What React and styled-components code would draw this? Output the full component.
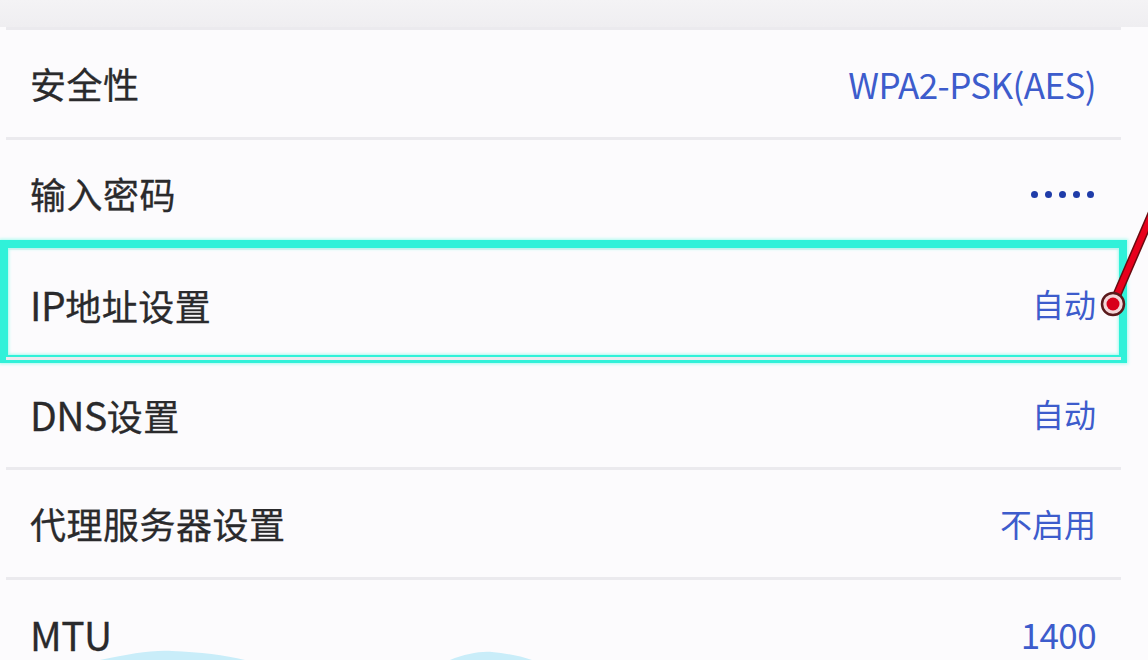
import React from 'react';
import styled, { createGlobalStyle } from 'styled-components';

const GlobalStyle = createGlobalStyle`
  html, body {
    margin: 0;
    padding: 0;
    background: #fcfbfd;
  }
  #root {
    width: 1148px;
    height: 660px;
    overflow: hidden;
  }
`;

const StyledPage = styled.div`
  position: relative;
  width: 1148px;
  height: 660px;
  overflow: hidden;
  background: #fcfbfd;
  font-family: 'Noto Sans CJK SC', 'Noto Sans', sans-serif;
`;

const StyledTopBand = styled.div`
  height: 27px;
  background: linear-gradient(to bottom, #f4f3f5, #efeef1);
`;

const StyledList = styled.div`
  margin-left: 6px;
  width: 1115px;
`;

const StyledRow = styled.div`
  position: relative;
  box-sizing: border-box;
  height: 110px;
  padding-top: 1px;
  border-top: 3px solid #ebeaee;
  display: flex;
  align-items: center;
  justify-content: space-between;
  padding-left: 24px;
  padding-right: 25px;
  line-height: 1.1;
`;

const StyledLabel = styled.span`
  font-size: 36px;
  color: #2a2a2c;
  letter-spacing: 0.5px;
  -webkit-text-stroke: 0.3px #2a2a2c;
`;

const StyledLatin = styled.span`
  font-size: 39px;
  letter-spacing: -0.5px;
`;

const StyledValue = styled.span`
  font-size: ${({ latin }) => (latin ? '35px' : '32px')};
  color: #3d5ccc;
  letter-spacing: ${({ latin }) => (latin ? '-0.6px' : '0')};
`;

const StyledDots = styled.span`
  display: flex;
  gap: 7px;
  margin-right: 2px;
`;

const StyledDot = styled.i`
  width: 7px;
  height: 7px;
  border-radius: 50%;
  background: #1f3ca9;
`;

const StyledHighlight = styled.div`
  position: absolute;
  left: -6px;
  right: -6px;
  top: -10px;
  bottom: -6px;
  border: 8px solid #30f1d9;
  box-shadow: 0 0 3px 1px #a8fbef, inset 0 0 3px 1px #a8fbef;
  pointer-events: none;
`;

const StyledPointer = styled.svg`
  position: absolute;
  left: 1088px;
  top: 205px;
  width: 60px;
  height: 120px;
`;

const StyledClouds = styled.svg`
  position: absolute;
  left: 0;
  bottom: 0;
  width: 1148px;
  height: 14px;
`;

const rows = [
  { label: ['安全性'], value: 'WPA2-PSK(AES)', latin: true },
  { label: ['输入密码'], dots: 5 },
  { label: ['IP', '地址设置'], value: '自动', highlight: true },
  { label: ['DNS', '设置'], value: '自动' },
  { label: ['代理服务器设置'], value: '不启用' },
  { label: ['MTU'], latinLabel: true, value: '1400', latin: true },
];

const renderLabel = (row) => {
  if (row.latinLabel) return <StyledLatin>{row.label[0]}</StyledLatin>;
  if (row.label.length === 2) {
    return (
      <>
        <StyledLatin>{row.label[0]}</StyledLatin>
        {row.label[1]}
      </>
    );
  }
  return row.label[0];
};

const App = () => (
  <>
    <GlobalStyle />
    <StyledPage>
      <StyledTopBand />
      <StyledList>
        {rows.map((row) => (
          <StyledRow key={row.label.join('')}>
            <StyledLabel>{renderLabel(row)}</StyledLabel>
            {row.dots ? (
              <StyledDots>
                {Array.from({ length: row.dots }).map((_, i) => (
                  <StyledDot key={i} />
                ))}
              </StyledDots>
            ) : (
              <StyledValue latin={row.latin}>{row.value}</StyledValue>
            )}
            {row.highlight && <StyledHighlight />}
          </StyledRow>
        ))}
      </StyledList>

      <StyledPointer viewBox="0 0 60 120">
        <line x1="66" y1="4" x2="25" y2="99" stroke="#6b0a10" strokeWidth="9" strokeLinecap="round" />
        <line x1="66" y1="4" x2="25" y2="99" stroke="#e8001c" strokeWidth="6" strokeLinecap="round" />
        <circle cx="25" cy="99" r="11" fill="#f3d6d8" stroke="#5a1a1c" strokeWidth="2.5" />
        <circle cx="25" cy="99" r="6.5" fill="#d8001a" />
      </StyledPointer>

      <StyledClouds viewBox="0 0 1148 14">
        <path d="M100 14 C130 8 150 4 172 5 C200 6 225 9 245 14 Z" fill="#c9edf9" />
        <path d="M450 14 C465 8 480 5 492 6 C505 7 520 10 532 14 Z" fill="#c9edf9" />
      </StyledClouds>
    </StyledPage>
  </>
);

export default App;
